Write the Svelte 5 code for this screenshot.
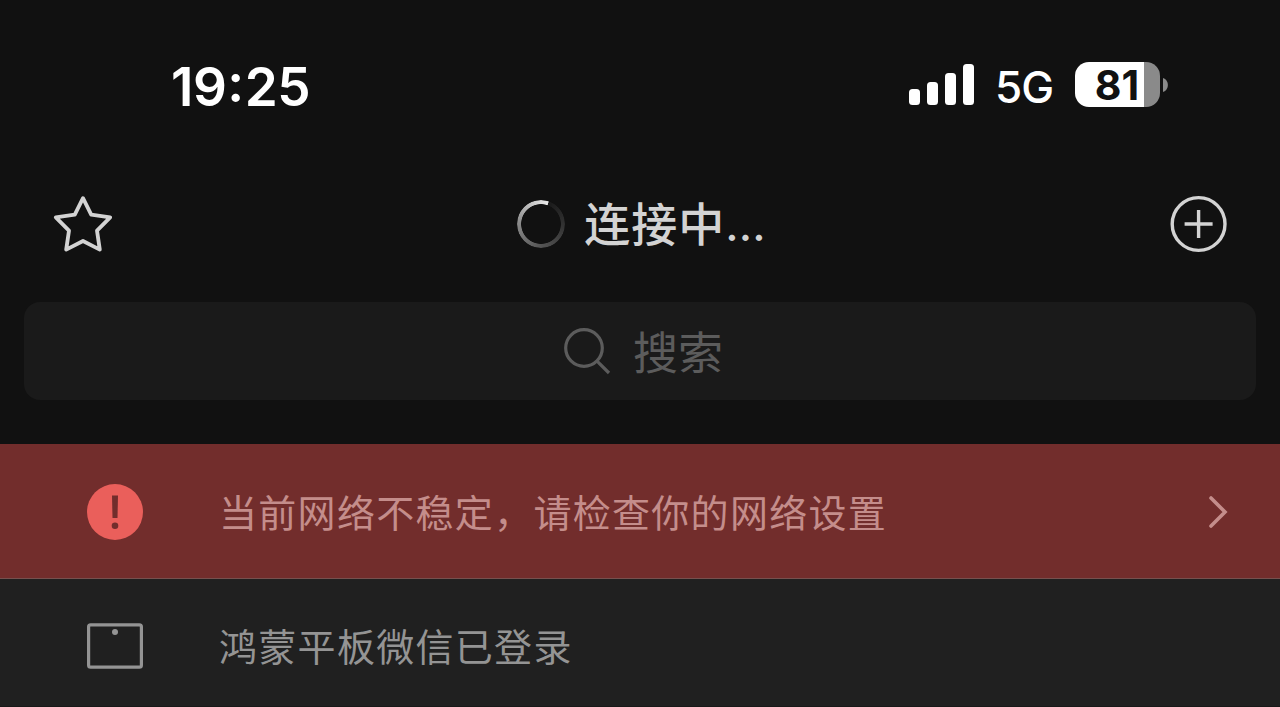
<script lang="ts">
  const hours = '19';
  const minutes = '25';
  const network = '5G';
  const battery = 81;

  const signal = [16, 23, 32, 41];
</script>

<main class="screen">
  <header class="status">
    <time>{hours}<span>:</span>{minutes}</time>
    <div class="indicators">
      <div class="signal" aria-label="信号">
        {#each signal as height}
          <i style="height: {height}px"></i>
        {/each}
      </div>
      <span class="network">{network}</span>
      <div class="battery">
        <div class="cell" style="--level: {battery}%">{battery}</div>
        <svg width="5" height="14" viewBox="0 0 5 14">
          <path d="M0 0C6.5 1.8 6.5 12.2 0 14Z" fill="#8a8a8a" />
        </svg>
      </div>
    </div>
  </header>

  <nav class="titlebar">
    <button aria-label="收藏">
      <svg width="60" height="60" viewBox="0 0 60 60">
        <path
          d="M30 4.2 38.2 20.7 57.2 23.3 44 36.6 46.8 55.6 30 47 13.2 55.6 16 36.6 2.8 23.3 21.8 20.7Z"
          fill="none"
          stroke="#d3d3d3"
          stroke-width="3.8"
          stroke-linejoin="round"
        />
      </svg>
    </button>
    <div class="title">
      <div class="spinner"></div>
      <h1>连接中<span>...</span></h1>
    </div>
    <button aria-label="添加">
      <svg width="58" height="58" viewBox="0 0 58 58" fill="none" stroke="#d3d3d3">
        <circle cx="28.6" cy="29" r="26.4" stroke-width="3.4" />
        <path d="M28.6 15v28M14.6 29h28" stroke-width="3.4" />
      </svg>
    </button>
  </nav>

  <div class="search" role="search">
    <svg width="48" height="48" viewBox="0 0 48 48" fill="none" stroke="#5c5c5c" stroke-width="3.2">
      <circle cx="21" cy="21" r="18.3" />
      <path d="M33.8 33.8 46 46" />
    </svg>
    <span>搜索</span>
  </div>

  <section class="notice warning">
    <svg class="icon" width="56" height="56" viewBox="0 0 56 56">
      <circle cx="28" cy="28" r="28" fill="#ea5f5b" />
      <path d="M25 11.5h6l-.5 22.5h-5Z" fill="#722d2c" />
      <circle cx="28" cy="41.7" r="3.3" fill="#722d2c" />
    </svg>
    <p>当前网络不稳定，请检查你的网络设置</p>
    <svg class="arrow" width="20" height="34" viewBox="0 0 20 34">
      <path
        d="M3 3 17 17 3 31"
        fill="none"
        stroke="#c48d8b"
        stroke-width="3.6"
        stroke-linecap="round"
      />
    </svg>
  </section>

  <section class="notice device">
    <svg class="icon" width="56" height="46" viewBox="0 0 56 46">
      <rect
        x="1.6"
        y="1.8"
        width="52.8"
        height="42.4"
        rx="2"
        fill="none"
        stroke="#949494"
        stroke-width="3.2"
      />
      <circle cx="28" cy="9" r="3" fill="#949494" />
    </svg>
    <p>鸿蒙平板微信已登录</p>
  </section>
</main>

<style>
  :global(body) {
    margin: 0;
    background: #111;
  }
  .screen {
    display: flex;
    flex-direction: column;
    width: 1280px;
    height: 707px;
    overflow: hidden;
    background: #111;
    font-family: 'Noto Sans CJK SC', 'Noto Sans', sans-serif;
  }
  .status {
    display: flex;
    justify-content: space-between;
    height: 168px;
    padding: 0 112px 0 171px;
    box-sizing: border-box;
    color: #fff;
    font-family: Inter, sans-serif;
  }
  time {
    padding-top: 56px;
    font-size: 53px;
    font-weight: 600;
    line-height: 62px;
    letter-spacing: -0.5px;
  }
  time span {
    display: inline-block;
    margin: 0 1px;
    transform: translateY(-4px);
  }
  .indicators {
    display: flex;
    align-items: flex-start;
    padding-top: 62px;
  }
  .signal {
    display: flex;
    align-items: flex-end;
    gap: 7px;
    height: 43px;
  }
  .signal i {
    width: 11px;
    border-radius: 3.5px;
    background: #fff;
  }
  .network {
    width: 60px;
    margin: 0 20px 0 21px;
    font-size: 44px;
    font-weight: 450;
    line-height: 51px;
    letter-spacing: -1px;
  }
  .battery {
    display: flex;
    align-items: center;
    gap: 3px;
  }
  .cell {
    width: 85px;
    height: 45px;
    border-radius: 14px;
    background: linear-gradient(to right, #fff var(--level), #8a8a8a var(--level));
    color: #111;
    font-size: 41px;
    font-weight: 700;
    line-height: 46px;
    text-align: center;
    text-indent: -1px;
  }
  .titlebar {
    display: flex;
    align-items: center;
    justify-content: space-between;
    height: 112px;
    margin-bottom: 22px;
    padding: 0 52px 0 53px;
  }
  button {
    display: flex;
    padding: 0;
    border: 0;
    background: none;
  }
  .title {
    display: flex;
    align-items: center;
    gap: 19px;
  }
  .spinner {
    width: 48px;
    height: 48px;
    border-radius: 50%;
    background: conic-gradient(
      from 20deg,
      #1a1a1a,
      #323232 20%,
      #555 45%,
      #8a8a8a 70%,
      #d8d8d8 93%,
      #e8e8e8 99.5%,
      #1a1a1a
    );
    mask: radial-gradient(circle, transparent 19.5px, #000 20.2px);
  }
  h1 {
    margin: 0;
    padding-bottom: 3px;
    color: #d3d3d3;
    font-size: 46px;
    font-weight: 500;
    line-height: 60px;
    letter-spacing: 1px;
  }
  h1 span {
    font-family: Inter, sans-serif;
    font-size: 44px;
    letter-spacing: 0.2px;
  }
  .search {
    display: flex;
    align-items: center;
    justify-content: center;
    gap: 22px;
    height: 98px;
    margin: 0 24px 44px;
    padding-left: 6px;
    border-radius: 16px;
    background: #1a1a1a;
    color: #5c5c5c;
    font-size: 45px;
    line-height: 60px;
  }
  .search span {
    padding-bottom: 1px;
  }
  .notice {
    display: flex;
    align-items: center;
    box-sizing: border-box;
    padding: 1px 52px 0 87px;
    font-size: 38px;
  }
  .notice p {
    flex: 1;
    margin: 0 0 0 76px;
    padding-bottom: 2px;
    line-height: 56px;
    letter-spacing: 1.3px;
  }
  .warning {
    height: 135px;
    border-bottom: 1px solid #76504e;
    background: #722d2c;
    color: #c48d8b;
  }
  .device {
    height: 128px;
    padding-top: 7px;
    border-bottom: 1px solid #181818;
    background: #202020;
    color: #949494;
  }
  svg {
    flex: none;
  }
</style>
